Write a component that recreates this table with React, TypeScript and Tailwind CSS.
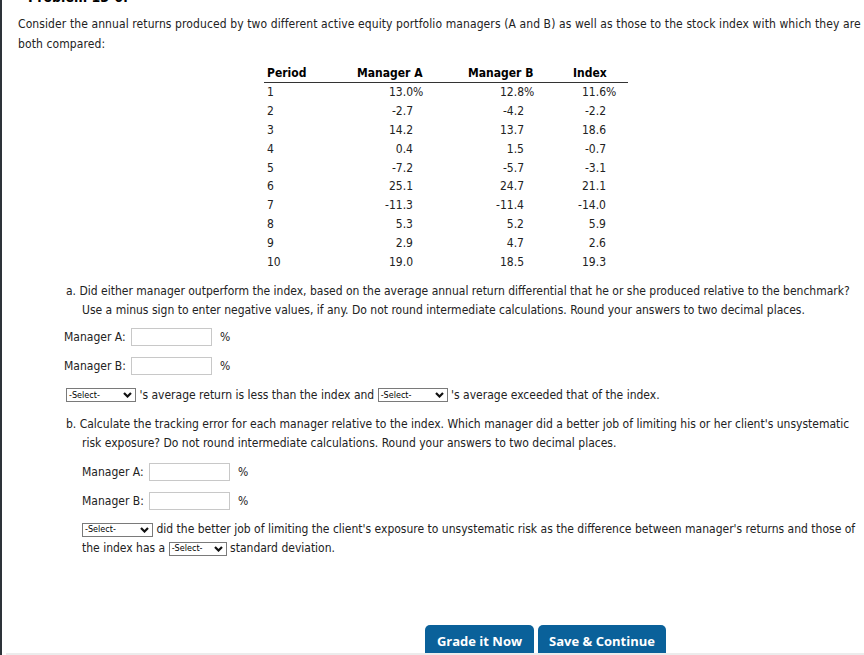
import React from "react"

const rows = [
  ["1", "13.0", "12.8", "11.6"],
  ["2", "-2.7", "-4.2", "-2.2"],
  ["3", "14.2", "13.7", "18.6"],
  ["4", "0.4", "1.5", "-0.7"],
  ["5", "-7.2", "-5.7", "-3.1"],
  ["6", "25.1", "24.7", "21.1"],
  ["7", "-11.3", "-11.4", "-14.0"],
  ["8", "5.3", "5.2", "5.9"],
  ["9", "2.9", "4.7", "2.6"],
  ["10", "19.0", "18.5", "19.3"],
]

function Select({ width }: { width: string }) {
  return (
    <span
      className={`inline-flex h-[14px] items-center justify-between border border-[#7a7a7a] bg-white pl-[2px] pr-[3px] align-middle text-[9px] leading-none text-black ${width}`}
    >
      <span>-Select-</span>
      <svg width="9" height="6" viewBox="0 0 9 6" className="shrink-0">
        <polyline points="1,1 4.5,4.5 8,1" fill="none" stroke="#111" strokeWidth="2.2" />
      </svg>
    </span>
  )
}

function AnswerRow({ label, offset, gap }: { label: string; offset: string; gap: string }) {
  return (
    <div className={`flex h-[18px] items-center ${offset} ${gap}`}>
      <span className="w-[67px]">{label}</span>
      <span className="h-[18px] w-[81px] border border-[#c8c8c8] bg-white" />
      <span className="ml-2">%</span>
    </div>
  )
}

function Value({ v, pct }: { v: string; pct: boolean }) {
  return (
    <span className="flex justify-end">
      <span>{v}</span>
      <span className="inline-block w-0 overflow-visible whitespace-nowrap">{pct ? "%" : ""}</span>
    </span>
  )
}

export default function App() {
  return (
    <div className="relative h-[655px] w-[864px] overflow-hidden border-l-2 border-[#2d3339] bg-white text-[#222] font-['DejaVu_Sans_Condensed','DejaVu_Sans',sans-serif] text-[12px]">
      <div className="pl-[16px] pr-[2px]">
        {/* Problem title, scrolled mostly out of view */}
        <div className="h-[14px] overflow-hidden pl-[10px]">
          <div className="-mt-[11px] text-[14px] font-bold leading-[16px] text-black">Problem 13-6:</div>
        </div>

        <p className="leading-[20px] tracking-[0.1px]">
          Consider the annual returns produced by two different active equity portfolio managers (A and B) as well as those to the stock index with which they are both compared:
        </p>

        {/* Returns table */}
        <div className="ml-[246px] mt-[9px] w-[364px]">
          <div className="grid h-[20px] grid-cols-[90px_111px_105px_58px] items-center border-b border-[#333] pl-[3px] font-bold text-black">
            <span>Period</span>
            <span>Manager A</span>
            <span>Manager B</span>
            <span>Index</span>
          </div>
          {rows.map((r, i) => (
            <div key={r[0]} className="grid h-[18.8px] grid-cols-[60px_86px_111px_82px] items-center pl-[3px]">
              <span>{r[0]}</span>
              <Value v={r[1]} pct={i === 0} />
              <Value v={r[2]} pct={i === 0} />
              <Value v={r[3]} pct={i === 0} />
            </div>
          ))}
        </div>

        {/* Part a */}
        <p className="mt-[11px] pl-[64px] -indent-4 leading-[19px]">
          a. Did either manager outperform the index, based on the average annual return differential that he or she produced relative to the benchmark? Use a minus sign to enter negative values, if any. Do not round intermediate calculations. Round your answers to two decimal places.
        </p>
        <AnswerRow label="Manager A:" offset="ml-[46px]" gap="mt-[8px]" />
        <AnswerRow label="Manager B:" offset="ml-[46px]" gap="mt-[11px]" />
        <p className="ml-[48px] mt-[11px] leading-[19px]">
          <Select width="w-[70px]" /> 's average return is less than the index and <Select width="w-[70px]" /> 's average exceeded that of the index.
        </p>

        {/* Part b */}
        <p className="mt-[10px] pl-[64px] -indent-4 leading-[19px]">
          b. Calculate the tracking error for each manager relative to the index. Which manager did a better job of limiting his or her client's unsystematic risk exposure? Do not round intermediate calculations. Round your answers to two decimal places.
        </p>
        <AnswerRow label="Manager A:" offset="ml-[64px]" gap="mt-[10px]" />
        <AnswerRow label="Manager B:" offset="ml-[64px]" gap="mt-[11px]" />
        <p className="mt-[10.5px] pl-[64px] leading-[19px]">
          <Select width="w-[71px]" /> did the better job of limiting the client's exposure to unsystematic risk as the difference between manager's returns and those of the index has a <Select width="w-[58px]" /> standard deviation.
        </p>

        <div className="ml-[407px] mt-[67px] flex gap-[4px] font-['Open_Sans',sans-serif] text-[13px] font-bold text-white">
          <button className="h-[32px] w-[109px] rounded-t-[5px] bg-[#0a619a]">Grade it Now</button>
          <button className="h-[32px] w-[128px] rounded-t-[5px] bg-[#0a619a]">Save &amp; Continue</button>
        </div>
      </div>

      <div className="absolute bottom-0 left-[4px] right-0 h-[2px] bg-[#ececec]" />
    </div>
  )
}
